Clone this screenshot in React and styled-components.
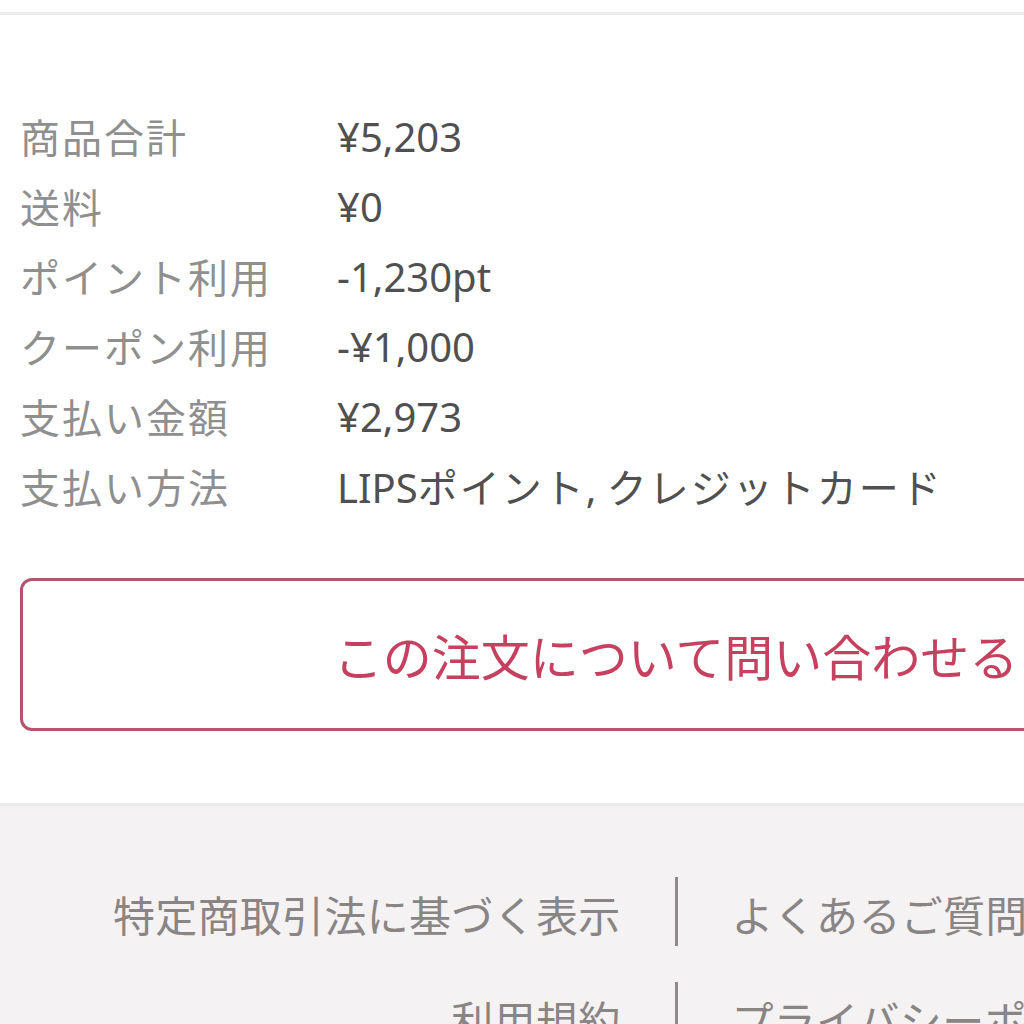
import React from 'react';
import styled, { createGlobalStyle } from 'styled-components';

const GlobalStyle = createGlobalStyle`
    html, body {
        margin: 0;
        padding: 0;
        background: #fff;
        overflow: hidden;
    }
    body {
        font-family: "Noto Sans", "Noto Sans CJK JP", sans-serif;
    }
`;

const Page = styled.div`
    width: 1352px;
    padding-top: 12px;
`;

const Summary = styled.section`
    border-top: 3px solid #ececec;
    padding: 86px 20px 72px;
    background: #fff;
`;

const List = styled.dl`
    margin: 0 0 57px;
`;

const Row = styled.div`
    display: flex;
    height: 70px;
    align-items: center;
    font-size: 40px;
`;

const Label = styled.dt`
    width: 317px;
    color: #8f8f8f;
    letter-spacing: 2px;
`;

const Value = styled.dd`
    margin: 0;
    color: #505050;
`;

const Kana = styled.span`
    letter-spacing: 2px;
`;

const InquiryButton = styled.button`
    display: block;
    width: 100%;
    height: 153px;
    background: #fff;
    border: 3px solid #b3556f;
    border-radius: 12px;
    color: #c6415f;
    font-family: inherit;
    font-size: 49px;
    padding: 0;
    cursor: pointer;
`;

const Footer = styled.footer`
    border-top: 3px solid #ebebeb;
    background: #f4f2f2;
    padding-top: 71px;
    min-height: 300px;
`;

const FooterRow = styled.div`
    display: flex;
    align-items: flex-start;
    height: 105px;
    font-size: 42px;
    color: #8a8585;
`;

const FooterLink = styled.a`
    flex: 1;
    text-align: ${props => (props.align === 'right' ? 'right' : 'left')};
    padding: 4px 54px 0;
    line-height: 69px;
    color: inherit;
    text-decoration: none;
    letter-spacing: 0.3px;
`;

const Divider = styled.span`
    width: 3px;
    height: 69px;
    background: #8f8a8a;
`;

const rows = [
    ['商品合計', '¥5,203'],
    ['送料', '¥0'],
    ['ポイント利用', '-1,230pt'],
    ['クーポン利用', '-¥1,000'],
    ['支払い金額', '¥2,973'],
    ['支払い方法', <>LIPS<Kana>ポイント</Kana>, <Kana>クレジットカード</Kana></>],
];

const links = [
    ['特定商取引法に基づく表示', 'よくあるご質問'],
    ['利用規約', 'プライバシーポリシー'],
];

const App = () => (
    <Page>
        <GlobalStyle />
        <Summary>
            <List>
                {rows.map(([label, value]) => (
                    <Row key={label}>
                        <Label>{label}</Label>
                        <Value>{value}</Value>
                    </Row>
                ))}
            </List>
            <InquiryButton>この注文について問い合わせる</InquiryButton>
        </Summary>
        <Footer>
            {links.map(([left, right]) => (
                <FooterRow key={left}>
                    <FooterLink align="right">{left}</FooterLink>
                    <Divider />
                    <FooterLink>{right}</FooterLink>
                </FooterRow>
            ))}
        </Footer>
    </Page>
);

export default App;
